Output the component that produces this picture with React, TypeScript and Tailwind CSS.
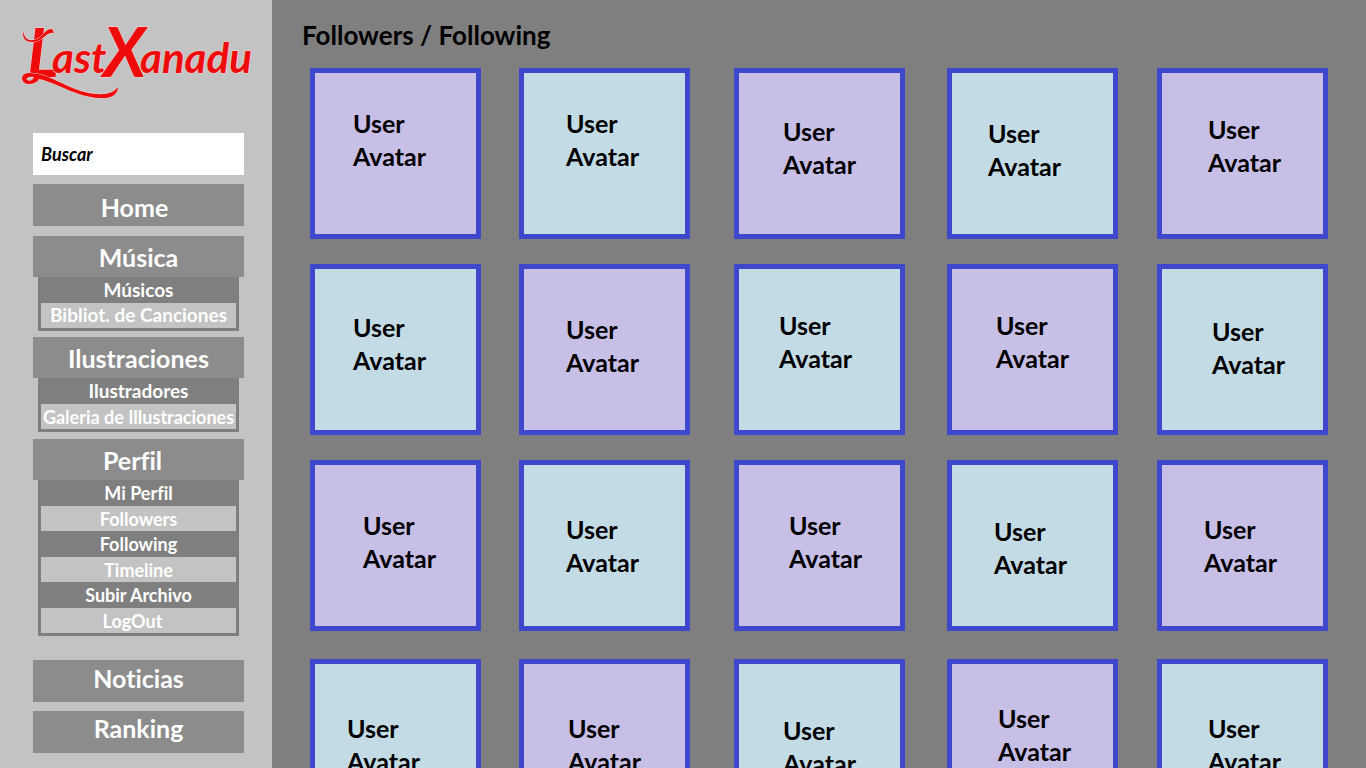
import React from "react";

type MenuLink = { label: string; size: string };
type MenuGroup = { title: string; spacing: string; titlePad: string; links: MenuLink[] };
type Avatar = { id: number; tone: string; label: string };

const groups: MenuGroup[] = [
  {
    title: "Música",
    spacing: "mt-[10px]",
    titlePad: "pr-0",
    links: [
      { label: "Músicos", size: "text-[19px]" },
      { label: "Bibliot. de Canciones", size: "text-[19px]" },
    ],
  },
  {
    title: "Ilustraciones",
    spacing: "mt-[6px]",
    titlePad: "pr-0",
    links: [
      { label: "Ilustradores", size: "text-[19px]" },
      { label: "Galeria de Illustraciones", size: "text-lg" },
    ],
  },
  {
    title: "Perfil",
    spacing: "mt-[7px]",
    titlePad: "pr-3",
    links: [
      { label: "Mi Perfil", size: "text-lg" },
      { label: "Followers", size: "text-lg" },
      { label: "Following", size: "text-lg" },
      { label: "Timeline", size: "text-lg" },
      { label: "Subir Archivo", size: "text-lg" },
      { label: "LogOut", size: "pr-3 text-lg" },
    ],
  },
];

const lilac = "bg-[#c8bfe7]";
const ice = "bg-[#c3dbe4]";

const labelSpots = [
  "pl-9.5 pt-8.5", "pl-10.5 pt-8.5", "pl-11 pt-10.5", "pl-9 pt-11", "pl-11.5 pt-10",
  "pl-9.5 pt-10.5", "pl-10.5 pt-11", "pl-10 pt-10", "pl-11 pt-10", "pl-12.5 pt-11.5",
  "pl-12 pt-11", "pl-10.5 pt-12", "pl-12.5 pt-11", "pl-10.5 pt-12.5", "pl-10.5 pt-12",
  "pl-8 pt-12", "pl-11 pt-12", "pl-11 pt-12.5", "pl-11.5 pt-9.5", "pl-11.5 pt-12",
];

const avatars: Avatar[] = labelSpots.map((label, id) => ({
  id,
  tone: id % 2 === 0 ? lilac : ice,
  label,
}));

const curl = "M24 31C23 39 30 43 39 38C44 34 46 29 52 29L54 33C48 32 45 37 40 40C30 45 20 40 24 31Z";
const sweep =
  "M38 74C55 77 74 93 97 94C108 95 114 92 118 87C118 94 112 99 100 98C76 97 58 83 39 79C37 83 32 84 28 84C20 83 20 73 29 73ZM27 80C30 82 33 80 34 77C29 76 26 78 27 80Z";

function Logo() {
  return (
    <svg viewBox="0 0 272 120" className="block h-[120px] w-full" role="img" aria-label="LastXanadu">
      <g fill="#ee0b0b" stroke="#f0d4d4" strokeWidth="1" paintOrder="stroke">
        <text x="27" y="77" fontFamily="Lato, sans-serif" fontStyle="italic" fontWeight="700">
          <tspan fontSize="66">L</tspan>
          <tspan x="52" y="73" fontSize="42">ast</tspan>
          <tspan x="103" y="77" fontSize="68">X</tspan>
          <tspan x="140" y="73" fontSize="42">anadu</tspan>
        </text>
        <path d={curl} />
        <path d={sweep} fillRule="evenodd" />
      </g>
    </svg>
  );
}

function MainButton({ label, spacing }: { label: string; spacing: string }) {
  return (
    <a href="#" className={`flex h-[42px] items-center justify-center bg-[#8c8c8c] text-[25px] text-white ${spacing}`}>
      {label}
    </a>
  );
}

function Group({ title, spacing, titlePad, links }: MenuGroup) {
  return (
    <section className={spacing}>
      <a
        href="#"
        className={`flex h-[41px] items-center justify-center bg-[#8c8c8c] pt-0.5 text-[25px] text-white ${titlePad}`}
      >
        {title}
      </a>
      <ul className="mx-[5px] bg-[#7f7f7f] px-[3px] pb-[3px] text-white">
        {links.map((link) => (
          <li key={link.label} className="h-[26px] even:h-[25px] even:bg-[#c3c3c3]">
            <a href="#" className={`flex h-full items-center justify-center whitespace-nowrap ${link.size}`}>
              {link.label}
            </a>
          </li>
        ))}
      </ul>
    </section>
  );
}

export default function App() {
  return (
    <div className="flex h-screen overflow-hidden bg-[#7f7f7f] font-['Lato',sans-serif] font-bold text-black [font-variant-ligatures:none]">
      <aside className="w-[272px] shrink-0 bg-[#c3c3c3]">
        <Logo />
        <nav className="mt-[13px] flex flex-col pr-7 pl-[33px]">
          <input
            type="search"
            aria-label="Buscar"
            placeholder="Buscar"
            className="h-[42px] w-full bg-white px-2 text-lg italic outline-none placeholder:text-black placeholder:opacity-100"
          />
          <MainButton label="Home" spacing="mt-[9px] pt-1.5 pr-2" />
          {groups.map((group) => (
            <Group key={group.title} {...group} />
          ))}
          <MainButton label="Noticias" spacing="mt-6 pb-1" />
          <MainButton label="Ranking" spacing="mt-[9px] pb-1.5" />
        </nav>
      </aside>
      <main className="min-w-0 flex-1 overflow-hidden px-[38px] pt-[18px]">
        <h1 className="-ml-2 text-[26px] leading-[34px]">Followers / Following</h1>
        <ul className="mt-4 grid grid-cols-[209fr_215fr_213fr_210fr_171px] grid-rows-[196px_196px_199px_171px]">
          {avatars.map((avatar) => (
            <li key={avatar.id}>
              <a
                href="#"
                className={`block size-[171px] border-5 border-[#3f48cc] text-[25px] leading-[33px] ${avatar.tone} ${avatar.label}`}
              >
                User
                <br />
                Avatar
              </a>
            </li>
          ))}
        </ul>
      </main>
    </div>
  );
}
